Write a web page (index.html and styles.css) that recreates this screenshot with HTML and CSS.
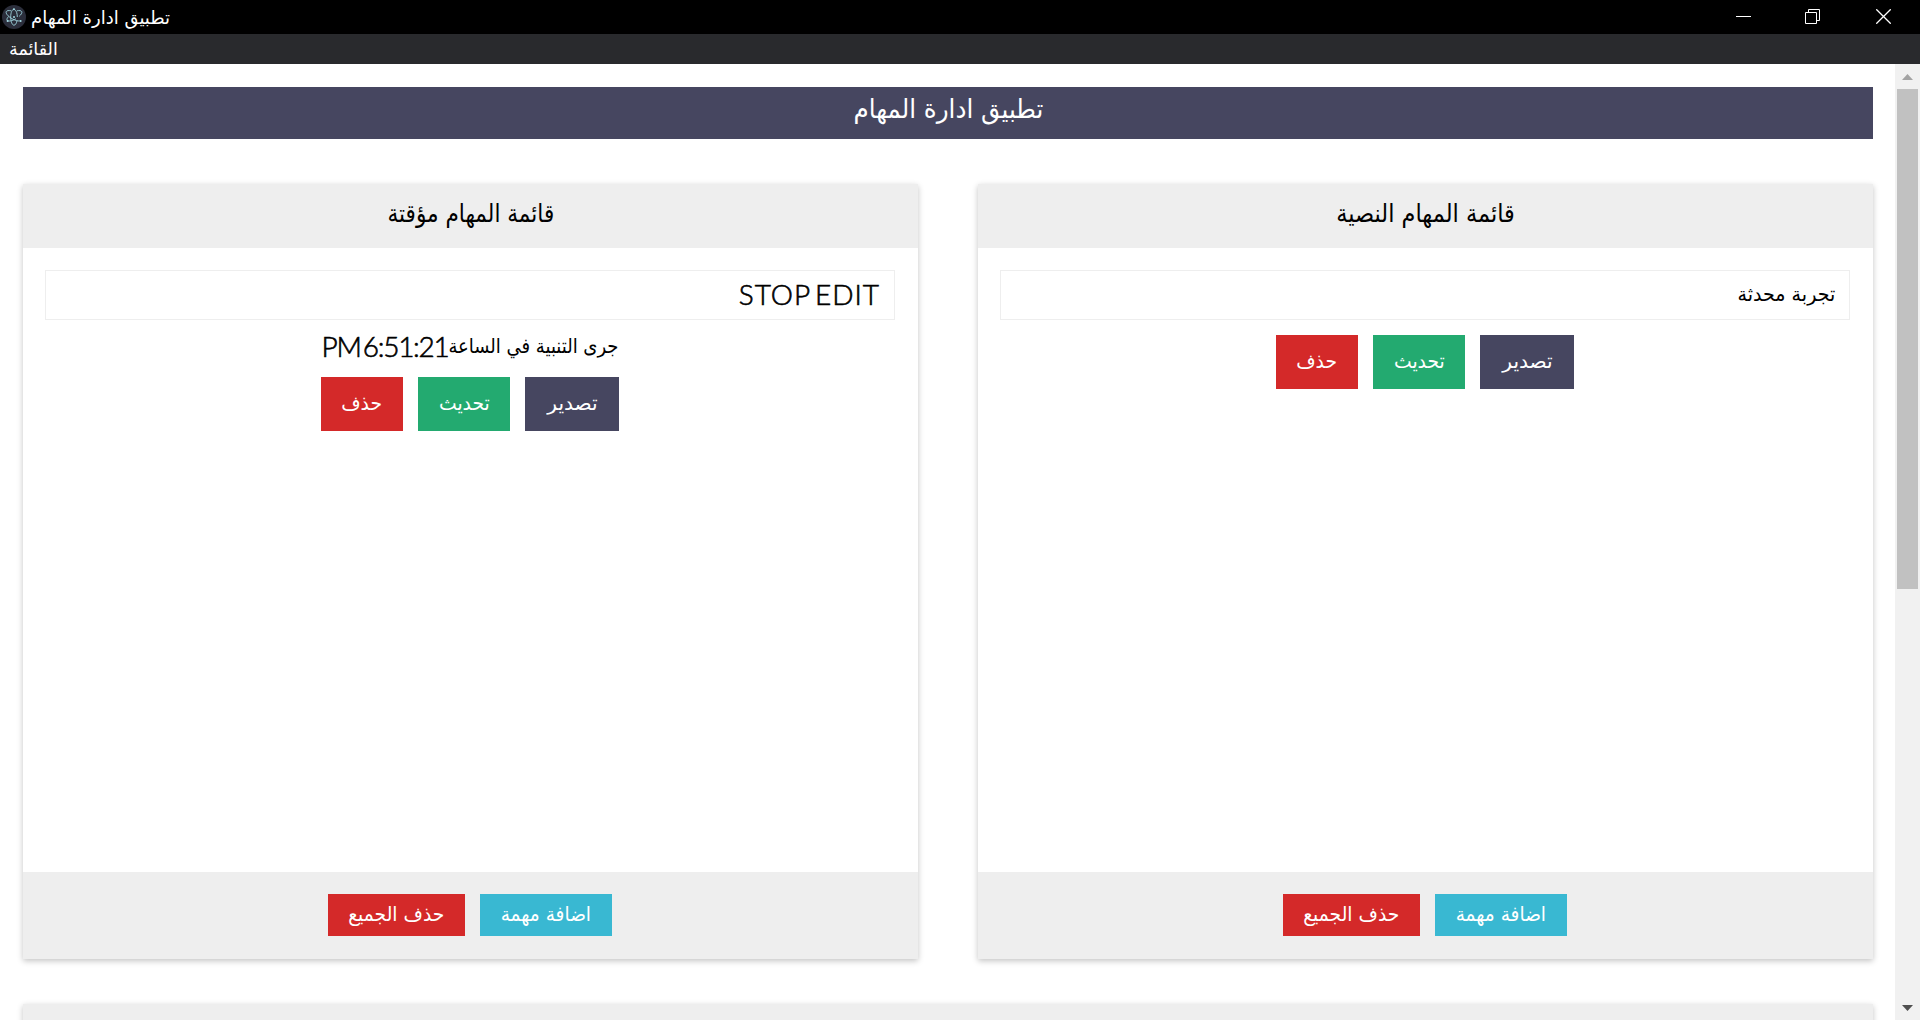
FILE: index.html
```
<!DOCTYPE html>
<html lang="ar">
<head>
<meta charset="utf-8">
<title>تطبيق ادارة المهام</title>
<link rel="stylesheet" href="styles.css">
</head>
<body>
<div class="titlebar">
  <svg class="app-icon" viewBox="0 0 24 24" width="24" height="24">
    <circle cx="12" cy="12" r="12" fill="#2b2e3b"/>
    <g fill="none" stroke="#a5dde6" stroke-opacity=".85" stroke-width="1">
      <path d="M9 5.8C6.6 5.3 4.8 5.6 4.3 6.6c-.9 1.6 1.600 4.700 5.700 7.100 3 1.700 6 2.500 7.800 2.200"/>
      <path d="M15 5.800c2.400-.5 4.200-.2 4.700.8.600 1.100-.4 2.900-2.500 4.700M14 13.700c-4.100 2.400-8 3-8.900 1.500-.5-.9.100-2.200 1.500-3.700"/>
      <path d="M12 4.200c-1.900 0-3.300 3.400-3.300 7.800 0 4.600 1.500 8.200 3.300 8.200 1.300 0 2.500-1.800 3-4.500M13 4.700c1.400 1.200 2.300 4 2.300 7.300"/>
    </g>
    <g fill="#a5dde6"><circle cx="12" cy="12" r="1"/><circle cx="12" cy="4.200" r="1"/><circle cx="5.600" cy="16" r="1"/><circle cx="18.600" cy="16" r="1"/></g>
  </svg>
  <span class="window-title" dir="rtl">تطبيق ادارة المهام</span>
  <div class="window-buttons">
    <svg width="15" height="15" viewBox="0 0 15 15"><path d="M0 7.5h15"/></svg>
    <svg width="15" height="15" viewBox="0 0 15 15"><path d="M.5 3.5h11v11H.5zM3.5 3.5v-3h11v11h-3"/></svg>
    <svg width="15" height="15" viewBox="0 0 15 15"><path d="M.3.3l14.4 14.4M14.7.3L.3 14.7" stroke-width="1.3"/></svg>
  </div>
</div>
<div class="menubar" dir="rtl"><span>القائمة</span></div>
<div class="viewport">
  <main class="page" dir="rtl">
    <h1 class="banner"><span class="fit">تطبيق ادارة المهام</span></h1>
    <div class="cards">
      <section class="card">
        <h2 class="card-title"><span class="fit wide">قائمة المهام النصية</span></h2>
        <div class="card-body">
          <div class="task-input"><span class="fit task-text">تجربة محدثة</span></div>
          <div class="actions">
            <button class="btn export"><span class="fit">تصدير</span></button>
            <button class="btn update"><span class="fit">تحديث</span></button>
            <button class="btn delete"><span class="fit">حذف</span></button>
          </div>
        </div>
        <div class="card-footer">
          <button class="btn add"><span class="fit">اضافة مهمة</span></button>
          <button class="btn clear"><span class="fit">حذف الجميع</span></button>
        </div>
      </section>
      <section class="card">
        <h2 class="card-title"><span class="fit">قائمة المهام مؤقتة</span></h2>
        <div class="card-body">
          <div class="task-input"><span class="latin">STOP EDIT</span></div>
          <p class="alarm"><span class="alarm-label">جرى التنبية في الساعة</span><span class="latin time">6:51:21 PM</span></p>
          <div class="actions">
            <button class="btn export"><span class="fit">تصدير</span></button>
            <button class="btn update"><span class="fit">تحديث</span></button>
            <button class="btn delete"><span class="fit">حذف</span></button>
          </div>
        </div>
        <div class="card-footer">
          <button class="btn add"><span class="fit">اضافة مهمة</span></button>
          <button class="btn clear"><span class="fit">حذف الجميع</span></button>
        </div>
      </section>
    </div>
    <section class="card next-card"></section>
  </main>
  <div class="scrollbar">
    <svg width="25" height="25" viewBox="0 0 25 25"><path d="M7 16l5.5-6 5.5 6z" fill="#a3a3a3"/></svg>
    <div class="thumb"></div>
    <svg class="down" width="25" height="25" viewBox="0 0 25 25"><path d="M7 10l5.500 6 5.500-6z" fill="#505050"/></svg>
  </div>
</div>
</body>
</html>
```
FILE: styles.css
```
* { box-sizing: border-box; margin: 0; padding: 0; }
body {
  height: 1020px;
  display: flex;
  flex-direction: column;
  overflow: hidden;
  background: #fff;
  color: #000;
  font-family: "DejaVu Sans Condensed", "DejaVu Sans", sans-serif;
}
.titlebar {
  height: 34px;
  flex: none;
  display: flex;
  align-items: center;
  padding: 0 29px 0 2px;
  background: #000;
  color: #fff;
  font: 18px/34px "DejaVu Sans", sans-serif;
}
.window-title { margin-left: 5px; padding-top: 2px; }
.window-buttons { margin-left: auto; padding-bottom: 1px; display: flex; gap: 56px; }
.window-buttons svg { display: block; fill: none; stroke: #fff; stroke-width: 1; }
.window-buttons svg:first-child { margin-right: -2px; }
.menubar {
  height: 30px;
  flex: none;
  padding: 0 9px;
  background: #292a2d;
  color: #fff;
  text-align: left;
  font: 17.5px/30px "DejaVu Sans", sans-serif;
}
.viewport { flex: 1; min-height: 0; display: flex; }
.page { flex: 1; padding: 23px 22px 0 23px; overflow: hidden; }
.fit { display: inline-block; transform: scaleX(var(--sx, 1)); }
.banner {
  height: 52px;
  background: #464660;
  color: #fff;
  text-align: center;
  font: 26px/45px "DejaVu Sans", sans-serif;
  --sx: .945;
}
.cards { display: grid; grid-template-columns: 895px 895px; justify-content: space-between; margin-top: 45px; }
.card {
  height: 775px;
  display: flex;
  flex-direction: column;
  background: #fff;
  box-shadow: 0 2px 6px rgba(0, 0, 0, .24);
}
.card-title { height: 64px; background: #eee; text-align: center; font-size: 25px; font-weight: 400; line-height: 59px; --sx: .96; }
.card-title .wide { --sx: 1; }
.card-body { flex: 1; padding: 22px 23px 22px 22px; }
.task-input {
  height: 50px;
  border: 1px solid #eee;
  padding: 0 14px;
  font-size: 20px;
  line-height: 46px;
}
.task-text { --sx: 1.06; transform-origin: right; }
.latin {
  font-family: Lato, sans-serif;
  font-size: 28px;
  font-weight: 300;
  letter-spacing: 1px;
  word-spacing: -4px;
  -webkit-text-stroke: .6px #000;
}
.alarm { height: 42px; margin-bottom: 15px; display: flex; justify-content: center; font-size: 20px; line-height: 53px; white-space: nowrap; }
.alarm-label { line-height: 52px; }
.alarm .time { letter-spacing: -1.3px; }
.actions { display: flex; justify-content: center; gap: 15px; margin-top: 15px; }
.btn { border: 0; height: 54px; color: #fff; font-family: inherit; font-size: 20px; line-height: 48px; padding-bottom: 2px; }
.export { width: 94px; background: #464660; --sx: 1.12; }
.update { width: 92px; background: #23aa70; --sx: 1.04; }
.delete { width: 82px; background: #d42929; --sx: 1.04; }
.card-footer { height: 87px; display: flex; justify-content: center; gap: 15px; padding: 22px 1px 0 0; background: #eee; }
.card-footer .btn { height: 42px; line-height: 36px; }
.add { width: 132px; background: #39b8d2; --sx: 1.03; }
.clear { width: 137px; background: #d42929; --sx: 1.04; }
.next-card { margin-top: 45px; background: #eee; }
.scrollbar { width: 25px; display: flex; flex-direction: column; background: #f1f1f1; }
.thumb { height: 500px; margin: 0 2px; background: #c1c1c1; }
.down { margin-top: auto; }
```
